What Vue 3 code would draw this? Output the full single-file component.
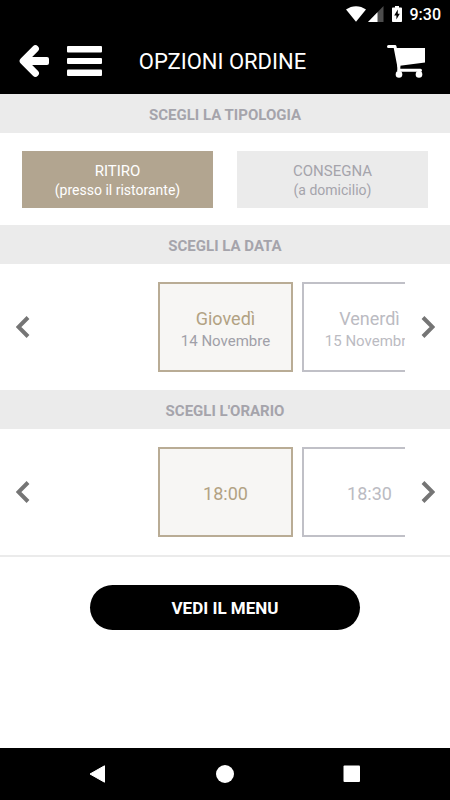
<template>
  <div class="screen">
    <div class="status-bar">
      <svg class="wifi" width="20" height="16" viewBox="0 0 20 16">
        <path d="M0 3.6C6 -1 14 -1 20 3.6L10 15.8Z" fill="#fff" />
      </svg>
      <svg class="signal" width="16" height="16" viewBox="0 0 16 16">
        <path d="M15.5 0V16H0Z" fill="#4d4d4d" />
        <path d="M9.5 6.2V16H0Z" fill="#fff" />
      </svg>
      <svg class="battery" width="10" height="16" viewBox="0 0 10 16">
        <path d="M0 2.4Q0 1.6 .8 1.6H3V0H7V1.6H9.2Q10 1.6 10 2.4V15.2Q10 16 9.2 16H.8Q0 16 0 15.2Z" fill="#fff" />
        <path d="M5.8 3.6L2.2 9.4H4.4V13.6L7.8 7.8H5.8Z" fill="#000" />
      </svg>
      <span class="clock">9:30</span>
    </div>

    <header class="header">
      <div class="header-left">
        <button class="icon-btn" aria-label="Indietro">
          <svg width="30" height="32" viewBox="0 0 30 32">
            <path d="M16.4 3.8L4.2 16L16.4 28.2" fill="none" stroke="#fff" stroke-width="7" stroke-linecap="round" stroke-linejoin="round" />
            <rect x="5" y="12" width="25" height="8" rx="2" fill="#fff" />
          </svg>
        </button>
        <button class="icon-btn" aria-label="Menu">
          <svg width="35" height="30" viewBox="0 0 35 30" fill="#fff">
            <rect width="35" height="6.5" rx="1" />
            <rect y="12" width="35" height="6" rx="1" />
            <rect y="23.5" width="35" height="6.5" rx="1" />
          </svg>
        </button>
      </div>
      <h1>OPZIONI ORDINE</h1>
      <div class="header-right">
        <button class="icon-btn" aria-label="Carrello">
          <svg width="38" height="33" viewBox="0 0 38 33">
            <path d="M1.5 1.6H8L11.8 21.2" fill="none" stroke="#fff" stroke-width="3" stroke-linecap="round" stroke-linejoin="round" />
            <path d="M8.2 3H38V17.6L11 21Z" fill="#fff" />
            <path d="M11.8 20V25.2H33.5" fill="none" stroke="#fff" stroke-width="3" stroke-linecap="round" stroke-linejoin="round" />
            <circle cx="12" cy="29.4" r="3.3" fill="#fff" />
            <circle cx="32" cy="29.4" r="3.3" fill="#fff" />
            <path d="M12 25V29M32 25V29" stroke="#fff" stroke-width="3" />
          </svg>
        </button>
      </div>
    </header>

    <main class="content">
      <h2>SCEGLI LA TIPOLOGIA</h2>
      <div class="types">
        <button
          v-for="type in types"
          :key="type.id"
          class="type"
          :class="{ active: type.id === selectedType }"
          @click="selectedType = type.id"
        >
          <span class="type-name">{{ type.name }}</span>
          <span class="type-note">{{ type.note }}</span>
        </button>
      </div>

      <template v-for="picker in pickers" :key="picker.title">
        <h2>{{ picker.title }}</h2>
        <div class="picker">
          <button class="arrow" aria-label="Precedente" @click="move(picker, -1)">
            <svg width="14" height="22" viewBox="0 0 14 22">
              <path d="M12 1.5L2.5 11L12 20.5" fill="none" stroke="#757575" stroke-width="4" />
            </svg>
          </button>
          <div class="track">
            <button
              v-for="(item, index) in picker.items"
              :key="item.label"
              class="card"
              :class="{ active: index === picker.selected }"
              @click="picker.selected = index"
            >
              <span class="card-label">{{ item.label }}</span>
              <span v-if="item.sub" class="card-sub">{{ item.sub }}</span>
            </button>
          </div>
          <button class="arrow" aria-label="Successivo" @click="move(picker, 1)">
            <svg width="14" height="22" viewBox="0 0 14 22">
              <path d="M2 1.5L11.5 11L2 20.5" fill="none" stroke="#757575" stroke-width="4" />
            </svg>
          </button>
        </div>
      </template>

      <div class="footer">
        <button class="submit">VEDI IL MENU</button>
      </div>
    </main>

    <nav class="nav-bar">
      <button class="icon-btn" aria-label="Back">
        <svg width="18" height="18" viewBox="0 0 18 18">
          <path d="M15.5 .8V17.2L1 9Z" fill="#fff" stroke="#fff" stroke-linejoin="round" />
        </svg>
      </button>
      <button class="icon-btn" aria-label="Home">
        <svg width="18" height="18" viewBox="0 0 18 18">
          <circle cx="9" cy="9" r="9" fill="#fff" />
        </svg>
      </button>
      <button class="icon-btn" aria-label="Recenti">
        <svg width="18" height="18" viewBox="0 0 18 18">
          <rect x=".5" y=".5" width="16.5" height="16.5" rx="1" fill="#fff" />
        </svg>
      </button>
    </nav>
  </div>
</template>

<script setup>
import { ref } from "vue";

const types = [
  { id: "ritiro", name: "RITIRO", note: "(presso il ristorante)" },
  { id: "consegna", name: "CONSEGNA", note: "(a domicilio)" },
];
const selectedType = ref("ritiro");

const pickers = ref([
  {
    title: "SCEGLI LA DATA",
    selected: 0,
    items: [
      { label: "Giovedì", sub: "14 Novembre" },
      { label: "Venerdì", sub: "15 Novembre" },
    ],
  },
  {
    title: "SCEGLI L'ORARIO",
    selected: 0,
    items: [{ label: "18:00" }, { label: "18:30" }],
  },
]);

function move(picker, step) {
  const next = picker.selected + step;
  if (next < 0 || next >= picker.items.length) return;
  picker.selected = next;
}
</script>

<style>
body {
  margin: 0;
  background: #fff;
}
</style>

<style scoped>
.screen {
  display: flex;
  flex-direction: column;
  min-height: 100vh;
  font-family: Roboto, sans-serif;
}

button {
  padding: 0;
  border: none;
  background: none;
  font-family: inherit;
  cursor: pointer;
}

svg {
  display: block;
}

.status-bar {
  display: flex;
  align-items: center;
  justify-content: flex-end;
  height: 28px;
  padding: 0 9px;
  background: #000;
  color: #fff;
}

.signal {
  margin-left: 2px;
}

.battery {
  margin: 0 8px;
}

.clock {
  font-size: 16px;
  font-weight: 500;
}

.header {
  display: grid;
  grid-template-columns: 1fr auto 1fr;
  align-items: center;
  height: 66px;
  padding: 0 25px 0 20px;
  background: #000;
}

.header-left {
  display: flex;
  align-items: center;
  gap: 18px;
  margin-left: -1px;
}

.header-right {
  display: flex;
  justify-content: flex-end;
}

h1 {
  margin: 0;
  color: #fff;
  font-size: 22px;
  font-weight: 400;
}

h2 {
  margin: 0;
  padding-top: 3px;
  background: #ebebeb;
  color: #a5a4ab;
  font-size: 15px;
  font-weight: 700;
  line-height: 36px;
  text-align: center;
}

.content {
  flex: 1;
}

.types {
  display: grid;
  grid-template-columns: 1fr 1fr;
  gap: 24px;
  padding: 18px 22px 17px;
}

.type {
  display: flex;
  flex-direction: column;
  align-items: center;
  justify-content: center;
  height: 57px;
  padding-top: 3px;
  background: #ebebeb;
  color: #a5a4ab;
  line-height: 19px;
}

.type.active {
  background: #b2a590;
  color: #fff;
}

.type-name {
  font-size: 15px;
}

.type-note {
  font-size: 14px;
}

.picker {
  display: flex;
  padding: 18px 0;
}

.arrow {
  display: flex;
  flex: 0 0 45px;
  align-items: center;
  justify-content: center;
}

.track {
  display: flex;
  flex: 1;
  gap: 9px;
  min-width: 0;
  padding-left: calc(50% - 112px);
  overflow: hidden;
}

.card {
  display: flex;
  flex: 0 0 135px;
  flex-direction: column;
  align-items: center;
  justify-content: center;
  box-sizing: border-box;
  height: 90px;
  padding-top: 4px;
  border: 2px solid #c0c0c7;
  color: #bbbbc2;
}

.card.active {
  border-color: #b9ac95;
  background: #f7f6f4;
  color: #b2a283;
}

.card-label {
  font-size: 18px;
  line-height: 24px;
}

.card-sub {
  font-size: 15px;
  line-height: 20px;
}

.card.active .card-sub {
  color: #a0a0a8;
}

.footer {
  display: flex;
  justify-content: center;
  padding: 28px 0;
  border-top: 2px solid #ebebeb;
}

.submit {
  width: 60%;
  height: 45px;
  border-radius: 23px;
  background: #000;
  color: #fff;
  font-size: 17px;
  font-weight: 700;
}

.nav-bar {
  display: flex;
  align-items: center;
  justify-content: space-between;
  height: 52px;
  padding: 0 89px;
  background: #000;
}
</style>
